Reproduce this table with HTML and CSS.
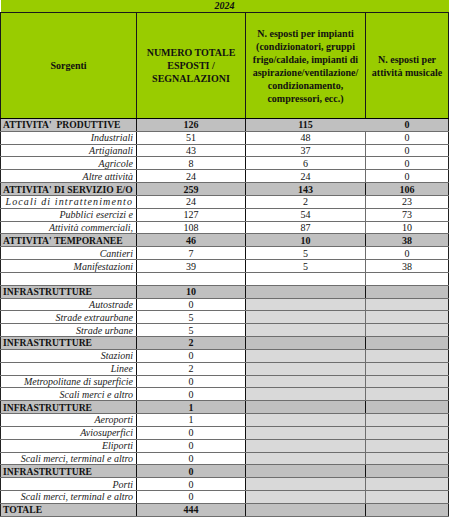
FILE: index.html
```html
<!DOCTYPE html>
<html lang="it">
<head>
<meta charset="utf-8">
<title>Sorgenti 2024</title>
<link rel="stylesheet" href="styles.css">
</head>
<body>
<table class="tbl">
  <colgroup>
    <col class="c1"><col class="c2"><col class="c3"><col class="c4">
  </colgroup>
  <thead>
    <tr class="year"><th colspan="4">2024</th></tr>
    <tr class="head">
      <th>Sorgenti</th>
      <th>NUMERO TOTALE<br>ESPOSTI /<br>SEGNALAZIONI</th>
      <th>N. esposti per impianti<br>(condizionatori, gruppi<br>frigo/caldaie, impianti di<br>aspirazione/ventilazione/<br>condizionamento,<br>compressori, ecc.)</th>
      <th>N. esposti per<br>attività musicale</th>
    </tr>
  </thead>
  <tbody>
    <tr class="sec first"><td class="lab">ATTIVITA'&nbsp; PRODUTTIVE</td><td>126</td><td>115</td><td>0</td></tr>
    <tr class="det"><td class="lab">Industriali</td><td>51</td><td>48</td><td>0</td></tr>
    <tr class="det"><td class="lab">Artigianali</td><td>43</td><td>37</td><td>0</td></tr>
    <tr class="det"><td class="lab">Agricole</td><td>8</td><td>6</td><td>0</td></tr>
    <tr class="det"><td class="lab">Altre attività</td><td>24</td><td>24</td><td>0</td></tr>
    <tr class="sec"><td class="lab">ATTIVITA' DI SERVIZIO E/O</td><td>259</td><td>143</td><td>106</td></tr>
    <tr class="det"><td class="lab wide">Locali di intrattenimento</td><td>24</td><td>2</td><td>23</td></tr>
    <tr class="det"><td class="lab">Pubblici esercizi e</td><td>127</td><td>54</td><td>73</td></tr>
    <tr class="det"><td class="lab">Attività commerciali,</td><td>108</td><td>87</td><td>10</td></tr>
    <tr class="sec"><td class="lab">ATTIVITA' TEMPORANEE</td><td>46</td><td>10</td><td>38</td></tr>
    <tr class="det"><td class="lab">Cantieri</td><td>7</td><td>5</td><td>0</td></tr>
    <tr class="det"><td class="lab">Manifestazioni</td><td>39</td><td>5</td><td>38</td></tr>
    <tr class="blank"><td></td><td></td><td></td><td></td></tr>
    <tr class="sec infra"><td class="lab">INFRASTRUTTURE</td><td>10</td><td></td><td></td></tr>
    <tr class="det infra"><td class="lab">Autostrade</td><td>0</td><td></td><td></td></tr>
    <tr class="det infra"><td class="lab">Strade extraurbane</td><td>5</td><td></td><td></td></tr>
    <tr class="det infra"><td class="lab">Strade urbane</td><td>5</td><td></td><td></td></tr>
    <tr class="sec infra"><td class="lab">INFRASTRUTTURE</td><td>2</td><td></td><td></td></tr>
    <tr class="det infra"><td class="lab">Stazioni</td><td>0</td><td></td><td></td></tr>
    <tr class="det infra"><td class="lab">Linee</td><td>2</td><td></td><td></td></tr>
    <tr class="det infra"><td class="lab">Metropolitane di superficie</td><td>0</td><td></td><td></td></tr>
    <tr class="det infra"><td class="lab">Scali merci e altro</td><td>0</td><td></td><td></td></tr>
    <tr class="sec infra"><td class="lab">INFRASTRUTTURE</td><td>1</td><td></td><td></td></tr>
    <tr class="det infra"><td class="lab">Aeroporti</td><td>1</td><td></td><td></td></tr>
    <tr class="det infra"><td class="lab">Aviosuperfici</td><td>0</td><td></td><td></td></tr>
    <tr class="det infra"><td class="lab">Eliporti</td><td>0</td><td></td><td></td></tr>
    <tr class="det infra"><td class="lab">Scali merci, terminal e altro</td><td>0</td><td></td><td></td></tr>
    <tr class="sec infra"><td class="lab">INFRASTRUTTURE</td><td>0</td><td></td><td></td></tr>
    <tr class="det infra"><td class="lab">Porti</td><td>0</td><td></td><td></td></tr>
    <tr class="det infra"><td class="lab">Scali merci, terminal e altro</td><td>0</td><td></td><td></td></tr>
    <tr class="sec infra total"><td class="lab">TOTALE</td><td>444</td><td></td><td></td></tr>
  </tbody>
</table>
</body>
</html>
```
FILE: styles.css
```css
html, body {
  margin: 0;
  padding: 0;
  background: #ffffff;
}

.tbl {
  border-collapse: collapse;
  table-layout: fixed;
  width: 448px;
  font-family: "Liberation Serif", "Times New Roman", serif;
  color: #111;
}

.c1 { width: 136px; }
.c2 { width: 109px; }
.c3 { width: 120px; }
.c4 { width: 83px; }

.tbl th,
.tbl td {
  padding: 0;
  text-align: center;
  white-space: nowrap;
  overflow: hidden;
}

/* header */
.year th {
  height: 12px;
  background: #99cc00;
  font-size: 10px;
  font-weight: bold;
  font-style: italic;
  line-height: 12px;
  border-bottom: 1px solid #1a1a1a;
}

.head th {
  height: 105px;
  background: #99cc00;
  font-size: 10px;
  font-weight: bold;
  line-height: 13px;
  vertical-align: middle;
  border-left: 1px solid #1a1a1a;
  border-right: 1px solid #1a1a1a;
  border-bottom: 1px solid #000;
}

/* body rows */
.tbl tbody td {
  height: 11.84px;
  font-size: 10px;
  line-height: 11px;
  border-top: 1px solid #6e6e6e;
  border-bottom: 1px solid #6e6e6e;
  border-left: 1px solid #6e6e6e;
  border-right: 1px solid #6e6e6e;
}

.tbl tbody td:nth-child(1) { border-left: 1px solid #222; border-right: 1px solid #111; }
.tbl tbody td:nth-child(2) { border-right: 1px solid #111; }
.tbl tbody td:nth-child(4) { border-right: 1px solid #222; }

.det .lab {
  text-align: right;
  font-style: italic;
  padding-right: 3px;
  color: #222;
}

.det .wide { letter-spacing: 1.1px; }

.sec td {
  background: #c0c0c0;
  font-weight: bold;
  border-top: 1px solid #000;
  border-bottom: 1px solid #000;
}

.sec .lab {
  text-align: left;
  padding-left: 2px;
  font-size: 9.6px;
}

.sec td:nth-child(3) { border-right: 1px solid #111; }
.sec.first td:nth-child(3) { border-right-color: #c0c0c0; }

.blank td {
  border-left: 0;
  border-right: 0;
}
.blank td:nth-child(1) { border-left: 1px solid #222; }
.blank td:nth-child(4) { border-right: 1px solid #222; }

.det.infra td:nth-child(3),
.det.infra td:nth-child(4) {
  background: #d9d9d9;
}

.total td {
  border-bottom: 2px solid #000;
}
```
